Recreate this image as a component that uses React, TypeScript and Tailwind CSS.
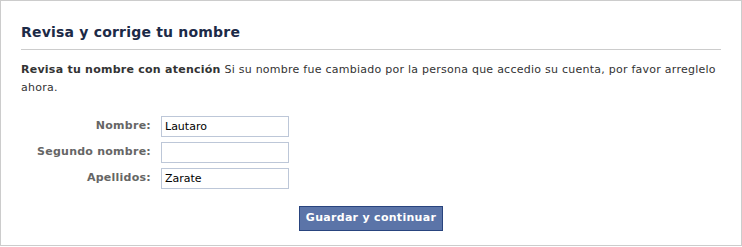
export default function App() {
  const fields = [
    { label: "Nombre:", value: "Lautaro" },
    { label: "Segundo nombre:", value: "" },
    { label: "Apellidos:", value: "Zarate" },
  ]

  return (
    <div className="w-[742px] h-[246px] bg-white border border-[#cccccc] px-5 pt-[21px] font-['DejaVu_Sans',sans-serif] text-[#333333]">
      {/* Header */}
      <h2 className="text-[14px] leading-[20px] tracking-[0.2px] font-bold text-[#1c2a47] pb-[7px] border-b border-[#cccccc]">
        Revisa y corrige tu nombre
      </h2>

      <p className="mt-[11px] text-[11px] leading-[18px] tracking-[0.25px] whitespace-nowrap">
        <span className="font-bold">Revisa tu nombre con atención</span> Si su nombre fue cambiado por la persona que accedio su cuenta, por favor arreglelo
        <br />
        ahora.
      </p>

      {/* Form */}
      <div className="mt-[19px] flex flex-col gap-[5px]">
        {fields.map((f) => (
          <div key={f.label} className="flex items-center">
            <label className="w-[140px] pr-[10px] text-right text-[11px] tracking-[0.25px] font-bold text-[#666666]">{f.label}</label>
            <input
              defaultValue={f.value}
              className="w-[128px] h-[21px] border border-[#bdc7d8] px-[3px] text-[11px] text-black outline-none"
            />
          </div>
        ))}
      </div>

      <div className="mt-[17px] flex justify-center">
        <button className="w-[144px] h-[25px] bg-[#5b74a8] border border-[#29447e] text-white text-[11px] tracking-[0.3px] font-bold">
          Guardar y continuar
        </button>
      </div>
    </div>
  )
}
